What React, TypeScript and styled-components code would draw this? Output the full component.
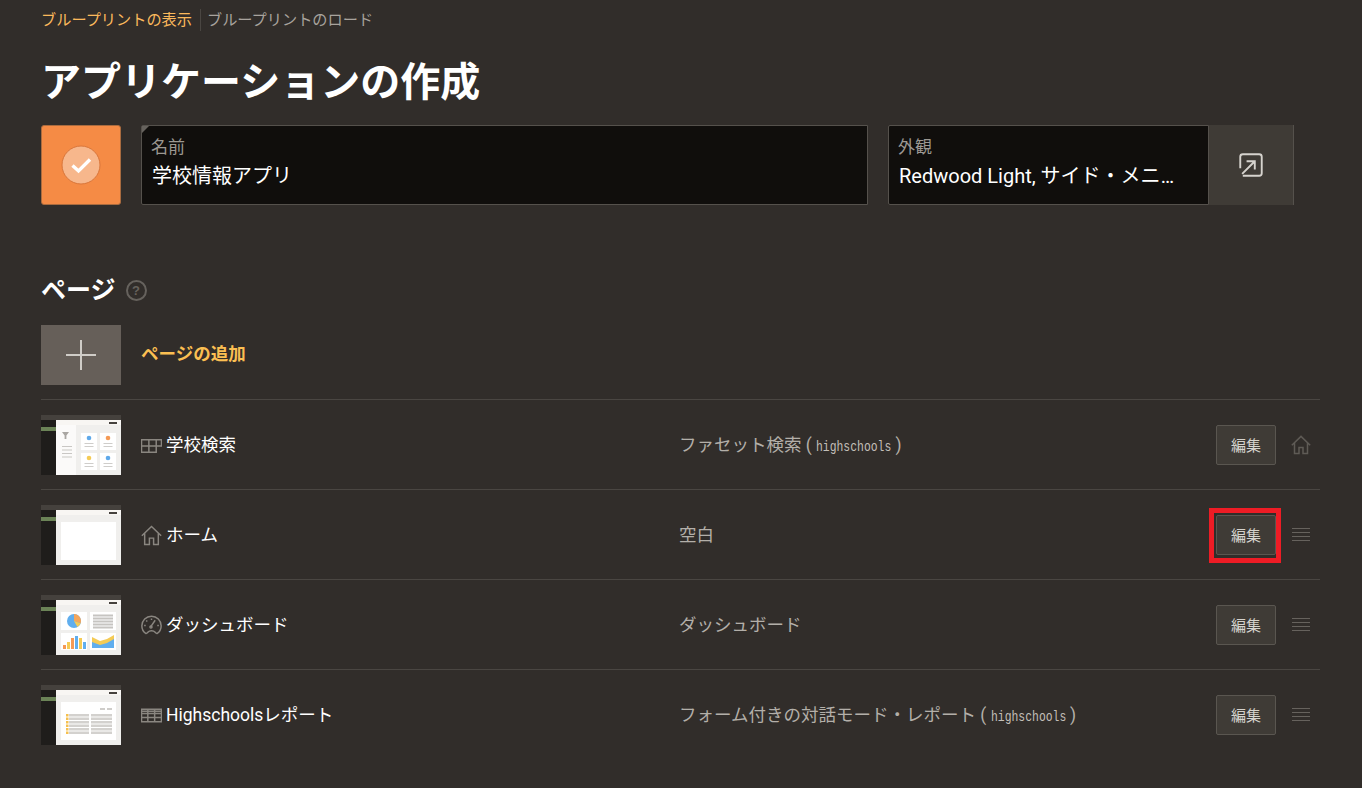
import React from "react";
import styled, { createGlobalStyle } from "styled-components";

const GlobalStyle = createGlobalStyle`
  html, body {
    margin: 0;
    padding: 0;
    background: #312d2a;
  }
  body {
    font-family: Roboto, "Noto Sans CJK JP", "Noto Sans", sans-serif;
    color: #fff;
    overflow: hidden;
  }
`;

type ThumbKind = "facet" | "blank" | "dashboard" | "report";
type RowIcon = "facet" | "home" | "gauge" | "table";

interface PageRow {
  id: string;
  thumb: ThumbKind;
  icon: RowIcon;
  name: string;
  type: string;
  source?: string;
  isHome?: boolean;
  highlighted?: boolean;
}

const pages: PageRow[] = [
  { id: "search", thumb: "facet", icon: "facet", name: "学校検索", type: "ファセット検索", source: "highschools", isHome: true },
  { id: "home", thumb: "blank", icon: "home", name: "ホーム", type: "空白", highlighted: true },
  { id: "dash", thumb: "dashboard", icon: "gauge", name: "ダッシュボード", type: "ダッシュボード" },
  { id: "report", thumb: "report", icon: "table", name: "Highschoolsレポート", type: "フォーム付きの対話モード・レポート", source: "highschools" },
];

const Thumb = ({ kind }: { kind: ThumbKind }) => (
  <ThumbSvg viewBox="0 0 80 60">
    <rect width="80" height="5" fill="#45413d" />
    <rect y="5" width="15" height="55" fill="#1f1d1b" />
    <rect y="12" width="15" height="4" fill="#6b8357" />
    <rect x="15" y="5" width="65" height="55" fill="#f0efed" />
    <rect x="15" y="5" width="65" height="5" fill="#f8f6f3" />
    <rect x="68" y="7" width="8" height="2" fill="#45413d" />
    {kind === "facet" && (
      <>
        <rect x="15" y="10" width="20" height="50" fill="#fbfaf9" />
        <path d="M21 17h7l-2.6 3.4V24h-1.8v-3.6z" fill="#a9a6a2" />
        {[31, 34.5, 38, 41.5].map((y) => (
          <rect key={y} x="21" y={y} width="10" height="1" fill="#c9c7c4" />
        ))}
        {[
          [40, 18, "#5fa9ea"],
          [59, 18, "#f59a55"],
          [40, 38, "#f5cb55"],
          [59, 38, "#5fa9ea"],
        ].map(([x, y, c]) => (
          <g key={`${x}-${y}`}>
            <rect x={x as number} y={y as number} width="16" height="17" fill="#fff" />
            <circle cx={(x as number) + 8} cy={(y as number) + 5} r="2.3" fill={c as string} />
            <rect x={(x as number) + 3.5} y={(y as number) + 10} width="9" height="1" fill="#cfcdca" />
            <rect x={(x as number) + 3.5} y={(y as number) + 13} width="9" height="1" fill="#cfcdca" />
          </g>
        ))}
      </>
    )}
    {kind === "blank" && <rect x="20" y="17" width="55" height="38" fill="#fff" />}
    {kind === "dashboard" && (
      <>
        <rect x="20" y="17" width="26" height="18" fill="#fff" />
        <rect x="49" y="17" width="26" height="18" fill="#fff" />
        <rect x="20" y="38" width="26" height="17" fill="#fff" />
        <rect x="49" y="38" width="26" height="17" fill="#fff" />
        <circle cx="33" cy="26" r="7" fill="#60aeee" />
        <path d="M33 26v-7a7 7 0 0 1 6.6 9.3z" fill="#f4a65c" />
        <path d="M33 26l6.6 2.3a7 7 0 0 1-3.2 3.8z" fill="#f5cb55" />
        {[19.5, 22.5, 25.5, 28.5, 31.5].map((y) => (
          <rect key={y} x="52" y={y} width="20" height="2" fill="#c6c4c1" />
        ))}
        <rect x="22" y="50" width="3" height="4" fill="#f59a55" />
        <rect x="26" y="47" width="3" height="7" fill="#f5cb55" />
        <rect x="30" y="43" width="3" height="11" fill="#f59a55" />
        <rect x="34" y="41" width="3" height="13" fill="#60aeee" />
        <rect x="38" y="43" width="3" height="11" fill="#f5cb55" />
        <rect x="42" y="47" width="3" height="7" fill="#60aeee" />
        <path d="M51 53V42l8 4 7-2 7-4v13z" fill="#f5cb55" />
        <path d="M51 53v-6l8 3 7-2 7-4v9z" fill="#60aeee" />
      </>
    )}
    {kind === "report" && (
      <>
        <rect x="20" y="17" width="55" height="38" fill="#fff" />
        <rect x="59" y="23" width="5" height="2" fill="#cfcdca" />
        <rect x="66" y="23" width="5" height="2" fill="#cfcdca" />
        {[29, 32.5, 36, 39.5, 43, 46.5].map((y) => (
          <g key={y}>
            <rect x="25" y={y} width="2.5" height="2.5" fill="#f5c04f" />
            <rect x="28" y={y} width="20" height="2.5" fill="#d3d1ce" />
            <rect x="50" y={y} width="21" height="2.5" fill="#d3d1ce" />
          </g>
        ))}
      </>
    )}
  </ThumbSvg>
);

const PageIcon = ({ name }: { name: RowIcon }) => {
  if (name === "facet") {
    return (
      <IconSvg viewBox="0 0 20 16">
        <path d="M.5 2.500h14v12H.5zM.5 8.500h14M7.500 2.500v12M14.500 2.500h5v6h-5" />
      </IconSvg>
    );
  }
  if (name === "home") {
    return (
      <IconSvg viewBox="0 0 20 20">
        <path d="M.8 10.200 10 1.400l9.200 8.800M3.500 8v10.500h4.500v-6h4v6h4.500V8" />
      </IconSvg>
    );
  }
  if (name === "gauge") {
    return (
      <IconSvg viewBox="0 0 20 20">
        <path d="M4.500 17.500C2.200 16 .8 13.300.8 10.300a9.200 9.200 0 0 1 18.400 0c0 3-1.400 5.700-3.700 7.200-.7.500-1.500-.4-2-1-.8-.9-2-1.400-3.500-1.400s-2.700.5-3.500 1.400c-.5.600-1.300 1.500-2 1z" />
        <path d="M9 11.500 13.500 5M3 10h1.500M10 3.300v1.500M15.500 10H17M5 5.200l1 1" />
        <circle cx="9.500" cy="11.500" r="1" />
      </IconSvg>
    );
  }
  return (
    <IconSvg viewBox="0 0 20 14">
      <path d="M.5 1h19v12H.5zM.5 5h19M.5 9h19M6.500 1v12M13 1v12M.5 3h19" />
    </IconSvg>
  );
};

export default function App() {
  return (
    <Page>
      <GlobalStyle />
      <Breadcrumbs>
        <Crumb $active>ブループリントの表示</Crumb>
        <Crumb>ブループリントのロード</Crumb>
      </Breadcrumbs>
      <Title>アプリケーションの作成</Title>

      <FieldRow>
        <AppIcon>
          <svg width="40" height="40" viewBox="0 0 40 40">
            <circle cx="20" cy="20" r="19" fill="#f7b78c" stroke="#d9763a" strokeWidth="1" />
            <path d="M11.500 20.500 17.500 26 29 14.500" fill="none" stroke="#fff" strokeWidth="3.400" />
          </svg>
        </AppIcon>
        <Field $grow>
          <FieldLabel>名前</FieldLabel>
          <FieldValue>学校情報アプリ</FieldValue>
        </Field>
        <AppearanceGroup>
          <Field $width={321}>
            <FieldLabel>外観</FieldLabel>
            <FieldValue>Redwood Light, サイド・メニュー</FieldValue>
          </Field>
          <OpenButton aria-label="外観">
            <svg width="24" height="24" viewBox="3 3 19 19" fill="none" stroke="#d6d3ce" strokeWidth="1.500">
              <path d="M4 15V6a2 2 0 0 1 2-2h13a2 2 0 0 1 2 2v13a2 2 0 0 1-2 2H6" />
              <path d="M5.500 19.500 15.500 9.500M9 9.500h6.500V16" />
            </svg>
          </OpenButton>
        </AppearanceGroup>
      </FieldRow>

      <SectionHeader>
        <SectionTitle>ページ</SectionTitle>
        <HelpMark>?</HelpMark>
      </SectionHeader>

      <AddRow>
        <AddTile>
          <svg width="30" height="30" viewBox="0 0 30 30" stroke="#cfccc7" strokeWidth="2">
            <path d="M15 0v30M0 15h30" />
          </svg>
        </AddTile>
        <AddLabel>ページの追加</AddLabel>
      </AddRow>

      {pages.map((row) => (
        <Row key={row.id}>
          <Thumb kind={row.thumb} />
          <RowName>
            <PageIcon name={row.icon} />
            <span>{row.name}</span>
          </RowName>
          <RowType>
            {row.type}
            {row.source && (
              <>
                {" ( "}
                <Source>{row.source}</Source>
                {" )"}
              </>
            )}
          </RowType>
          <EditButton $highlighted={row.highlighted}>編集</EditButton>
          <RowEnd>
            {row.isHome ? (
              <svg width="20" height="20" viewBox="0 0 20 20" fill="none" stroke="#5f5b56" strokeWidth="1.500">
                <path d="M.8 10.200 10 1.400l9.200 8.800M3.500 8v10.500h4.500v-6h4v6h4.500V8" />
              </svg>
            ) : (
              <svg width="18" height="14" viewBox="0 0 18 14" stroke="#66625d" strokeWidth="1">
                <path d="M0 .5h18M0 4.500h18M0 8.500h18M0 12.500h18" />
              </svg>
            )}
          </RowEnd>
        </Row>
      ))}
    </Page>
  );
}

const Page = styled.main`
  box-sizing: border-box;
  width: 1362px;
  height: 788px;
  padding: 9px 42px 0 41px;
  background: #312d2a;
  overflow: hidden;
`;

const Breadcrumbs = styled.nav`
  display: flex;
  align-items: center;
  height: 22px;
`;

const Crumb = styled.span<{ $active?: boolean }>`
  font-size: 15.2px;
  line-height: 22px;
  color: ${({ $active }) => ($active ? "#fbb95c" : "#a8a39d")};

  & + & {
    margin-left: 8px;
    padding-left: 6px;
    border-left: 1px solid #4a4642;
  }
`;

const Title = styled.h1`
  margin: 24px 0 0;
  font-size: 40px;
  line-height: 56px;
  font-weight: 700;
  color: #fff;
`;

const FieldRow = styled.section`
  display: flex;
  gap: 20px;
  height: 80px;
  margin: 14px 26px 0 0;
`;

const AppIcon = styled.div`
  flex: none;
  display: flex;
  align-items: center;
  justify-content: center;
  width: 80px;
  height: 80px;
  box-sizing: border-box;
  background: #f58b45;
  border: 1px solid #a96b3f;
  border-radius: 3px;
`;

const Field = styled.div<{ $grow?: boolean; $width?: number }>`
  position: relative;
  box-sizing: border-box;
  flex: ${({ $grow }) => ($grow ? "1 1 0" : "none")};
  width: ${({ $width }) => ($width ? `${$width}px` : "auto")};
  min-width: 0;
  padding: 9px 24px 0 9px;
  background: #100e0c;
  border: 1px solid #55514c;
  border-radius: 2px 0 0 2px;

  ${({ $grow }) =>
    $grow &&
    `
    &::before {
      content: "";
      position: absolute;
      top: 0;
      left: 0;
      border-top: 7px solid #66625d;
      border-right: 7px solid transparent;
    }
  `}
`;

const FieldLabel = styled.div`
  font-size: 17px;
  line-height: 24px;
  color: #9c9892;
`;

const FieldValue = styled.div`
  margin: 3px 0 0 1px;
  font-size: 20px;
  line-height: 28px;
  color: #fff;
  white-space: nowrap;
  overflow: hidden;
  text-overflow: ellipsis;
`;

const AppearanceGroup = styled.div`
  flex: none;
  display: flex;
  width: 406px;
`;

const OpenButton = styled.button`
  flex: 1;
  display: flex;
  align-items: center;
  justify-content: center;
  padding: 0;
  background: #3f3b36;
  border: 0;
  border-right: 1px solid #55514c;
`;

const SectionHeader = styled.header`
  display: flex;
  align-items: center;
  gap: 10px;
  height: 36px;
  margin-top: 67px;
`;

const SectionTitle = styled.h2`
  margin: 0;
  padding-top: 2px;
  font-size: 25px;
  line-height: 34px;
  font-weight: 700;
`;

const HelpMark = styled.span`
  display: flex;
  align-items: center;
  justify-content: center;
  box-sizing: border-box;
  width: 21px;
  height: 21px;
  margin-top: 1px;
  border: 2px solid #66625d;
  border-radius: 50%;
  font-family: "Liberation Sans", sans-serif;
  font-size: 13px;
  font-weight: 700;
  color: #66625d;
`;

const AddRow = styled.div`
  display: flex;
  align-items: center;
  gap: 20px;
  margin-top: 17px;
  padding-bottom: 14px;
  border-bottom: 1px solid #4a4642;
`;

const AddTile = styled.div`
  display: flex;
  align-items: center;
  justify-content: center;
  width: 80px;
  height: 60px;
  background: #665f59;
`;

const AddLabel = styled.span`
  margin-bottom: 5px;
  font-size: 17.5px;
  font-weight: 700;
  color: #fbbf52;
`;

const Row = styled.article`
  display: grid;
  grid-template-columns: 80px 558px 1fr 60px 35px;
  align-items: center;
  height: 90px;
  padding: 15px 9px 14px 0;
  box-sizing: border-box;
  border-bottom: 1px solid #4a4642;

  &:last-child {
    border-bottom-color: transparent;
  }
`;

const ThumbSvg = styled.svg`
  display: block;
  width: 80px;
  height: 60px;
`;

const RowName = styled.div`
  display: flex;
  align-items: center;
  gap: 4px;
  padding: 0 0 3px 20px;
  font-size: 17.5px;
  color: #fff;
`;

const IconSvg = styled.svg`
  flex: none;
  width: 21px;
  height: 21px;
  margin-top: 3px;
  fill: none;
  stroke: #8a8680;
  stroke-width: 1.4;
`;

const RowType = styled.div`
  padding-bottom: 3px;
  font-size: 17.5px;
  color: #b3afa9;
  white-space: nowrap;
`;

const Source = styled.code`
  display: inline-block;
  margin-right: -24px;
  font-family: "Liberation Mono", monospace;
  font-size: 15px;
  color: #c3bfb9;
  transform: scaleX(0.76);
  transform-origin: left center;
`;

const EditButton = styled.button<{ $highlighted?: boolean }>`
  position: relative;
  box-sizing: border-box;
  width: 60px;
  height: 40px;
  padding: 0 0 2px;
  font: 15px "Noto Sans CJK JP", sans-serif;
  color: #d6d3ce;
  background: #3f3b36;
  border: 1px solid #5a5650;
  border-radius: 2px;

  ${({ $highlighted }) =>
    $highlighted &&
    `
    &::after {
      content: "";
      position: absolute;
      inset: -8px -6px -9px -8px;
      border: 5px solid #ee1c25;
    }
  `}
`;

const RowEnd = styled.div`
  display: flex;
  justify-content: center;
  align-items: center;
  width: 20px;
  margin-left: 15px;
`;
